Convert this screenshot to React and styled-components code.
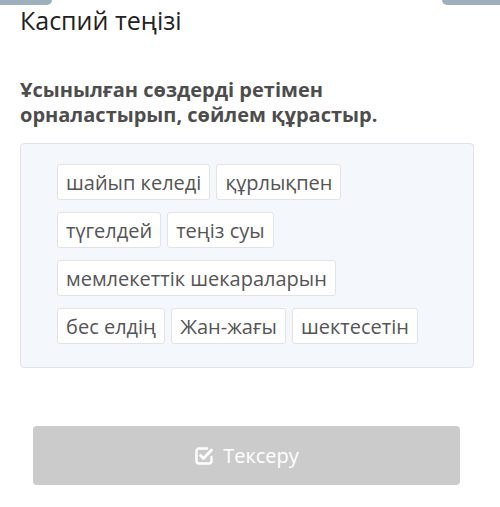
import React from "react";
import styled, { createGlobalStyle } from "styled-components";

const GlobalStyle = createGlobalStyle`
  html, body {
    margin: 0;
    padding: 0;
    background: #ffffff;
  }
  body {
    font-family: "Open Sans", "Noto Sans", sans-serif;
  }
`;

const words = [
  "шайып келеді",
  "құрлықпен",
  "түгелдей",
  "теңіз суы",
  "мемлекеттік шекараларын",
  "бес елдің",
  "Жан-жағы",
  "шектесетін",
];

const CheckIcon = () => (
  <svg width="21" height="20" viewBox="0 0 21 20" fill="none">
    <path
      d="M13 2.5H5a2.5 2.5 0 0 0-2.5 2.5v10A2.5 2.5 0 0 0 5 17.5h10a2.5 2.5 0 0 0 2.5-2.5v-4"
      stroke="#ffffff"
      strokeWidth="2.4"
      strokeLinecap="round"
    />
    <path
      d="M6.5 9.5l3 3 8-8.5"
      stroke="#ffffff"
      strokeWidth="2.8"
      strokeLinecap="round"
      strokeLinejoin="round"
    />
  </svg>
);

export default function App() {
  return (
    <>
      <GlobalStyle />
      <Page>
        <TopBar>
          <Tab $w={52} $side="left" />
          <Tab $w={58} $side="right" />
        </TopBar>
        <Content>
          <Title>Каспий теңізі</Title>
          <Question>
            Ұсынылған сөздерді ретімен
            <br />
            орналастырып, сөйлем құрастыр.
          </Question>
          <WordBox>
            {words.map((w) => (
              <Chip key={w}>{w}</Chip>
            ))}
          </WordBox>
          <CheckButton>
            <CheckIcon />
            <span>Тексеру</span>
          </CheckButton>
        </Content>
      </Page>
    </>
  );
}

const Page = styled.div`
  width: 500px;
  height: 507px;
  overflow: hidden;
  background: #ffffff;
`;

const TopBar = styled.div`
  display: flex;
  justify-content: space-between;
  height: 4px;
`;

const Tab = styled.div`
  width: ${(p) => p.$w}px;
  height: 5px;
  background: #9fb0bd;
  border-bottom-left-radius: ${(p) => (p.$side === "right" ? "6px" : "0")};
  border-bottom-right-radius: ${(p) => (p.$side === "left" ? "6px" : "0")};
`;

const Content = styled.div`
  padding: 0 26px 0 20px;
  display: flex;
  flex-direction: column;
`;

const Title = styled.h1`
  margin: 0;
  font-size: 25px;
  line-height: 32px;
  font-weight: 400;
  color: #222222;
`;

const Question = styled.p`
  margin: 41px 0 0;
  font-size: 20px;
  line-height: 25px;
  font-weight: 700;
  color: #4d4d4d;
`;

const WordBox = styled.div`
  margin-top: 16px;
  padding: 20px 36px 23px;
  background: #f4f8fd;
  border: 1px solid #dde4ec;
  border-radius: 4px;
  display: flex;
  flex-wrap: wrap;
  gap: 12px 6px;
`;

const Chip = styled.div`
  height: 36px;
  box-sizing: border-box;
  padding: 0 8px;
  background: #ffffff;
  border: 1px solid #e0e4e8;
  border-radius: 3px;
  font-size: 20px;
  line-height: 35px;
  color: #555555;
  white-space: nowrap;
`;

const CheckButton = styled.div`
  margin: 58px 14px 0 13px;
  height: 59px;
  border-radius: 4px;
  background: #cbcbcb;
  display: flex;
  align-items: center;
  justify-content: center;
  gap: 8px;
  font-size: 20px;
  color: #ffffff;
`;
